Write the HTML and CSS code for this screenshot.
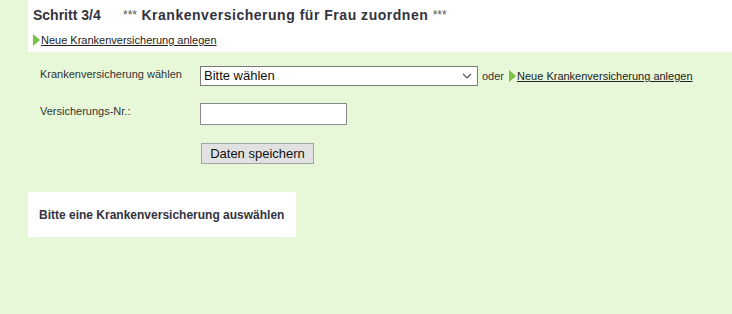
FILE: index.html
```html
<!DOCTYPE html>
<html lang="de">
<head>
<meta charset="utf-8">
<title>Schritt 3/4</title>
<link rel="stylesheet" href="styles.css">
</head>
<body>
<div class="header">
  <h1 class="title"><span class="step">Schritt 3/4</span><span class="heading"><span class="stars">***</span> Krankenversicherung für Frau zuordnen <span class="stars">***</span></span></h1>
  <a class="arrow-link" href="#"><span class="tri"></span>Neue Krankenversicherung anlegen</a>
</div>
<form class="form">
  <label class="label">Krankenversicherung wählen</label>
  <div class="field">
    <div class="select">Bitte wählen<svg class="chev" width="10" height="6" viewBox="0 0 10 6"><path d="M1 1 L5 5 L9 1" fill="none" stroke="#555" stroke-width="1.2"/></svg></div>
    <span class="oder">oder</span>
    <a class="arrow-link" href="#"><span class="tri"></span>Neue Krankenversicherung anlegen</a>
  </div>
  <label class="label">Versicherungs-Nr.:</label>
  <div class="field"><div class="input"></div></div>
  <span></span>
  <div class="field"><button type="button" class="btn">Daten speichern</button></div>
</form>
<div class="message">Bitte eine Krankenversicherung auswählen</div>
</body>
</html>
```
FILE: styles.css
```css
html, body {
  margin: 0;
  padding: 0;
}
body {
  background: #e7f8d8;
  font-family: "Liberation Sans", Arial, sans-serif;
  color: #333;
  width: 732px;
  height: 314px;
  overflow: hidden;
}
.header {
  margin-left: 28px;
  background: #fff;
  height: 52px;
  box-sizing: border-box;
  padding: 5px 0 0 5px;
}
.title {
  margin: 0;
  font-size: 14px;
  font-weight: bold;
  color: #333340;
  line-height: 20px;
  height: 27px;
}
.step {
  display: inline-block;
  width: 90px;
}
.heading {
  letter-spacing: 0.52px;
}
.stars {
  font-size: 12px;
  font-weight: normal;
  letter-spacing: 0;
  color: #555;
  position: relative;
  top: -1px;
}
.arrow-link {
  display: inline-flex;
  align-items: center;
  font-size: 11px;
  color: #222;
  text-decoration: underline;
  line-height: 14px;
}
.tri {
  display: inline-block;
  width: 0;
  height: 0;
  border-top: 6px solid transparent;
  border-bottom: 6px solid transparent;
  border-left: 7px solid #7bc043;
  margin-right: 1px;
}
.form {
  display: grid;
  grid-template-columns: 160px auto;
  row-gap: 17px;
  margin: 14px 0 0 40px;
  align-items: start;
}
.label {
  font-size: 11px;
  color: #333;
  padding-top: 1px;
  line-height: 14px;
}
.field {
  display: flex;
  align-items: center;
}
.select {
  box-sizing: border-box;
  width: 278px;
  height: 20px;
  border: 1px solid #7a7a7a;
  background: #fff;
  font-size: 13px;
  color: #111;
  padding: 0 0 0 3px;
  line-height: 18px;
  display: flex;
  align-items: center;
  justify-content: space-between;
}
.chev {
  margin-right: 5px;
}
.oder {
  font-size: 11px;
  margin: 0 5px 0 4px;
}
.input {
  box-sizing: border-box;
  width: 147px;
  height: 22px;
  border: 1px solid #8a8a8a;
  background: #fff;
}
.btn {
  box-sizing: border-box;
  width: 113px;
  height: 21px;
  margin: 1px 0 0 1px;
  padding: 0;
  border: 1px solid #a5a5a5;
  background: #e1e1e1;
  font-family: "Liberation Sans", Arial, sans-serif;
  font-size: 13px;
  color: #111;
}
.message {
  margin: 28px 0 0 28px;
  width: 268px;
  height: 45px;
  box-sizing: border-box;
  background: #fff;
  padding: 16px 0 0 11px;
  font-size: 12px;
  font-weight: bold;
  color: #333340;
}
```
